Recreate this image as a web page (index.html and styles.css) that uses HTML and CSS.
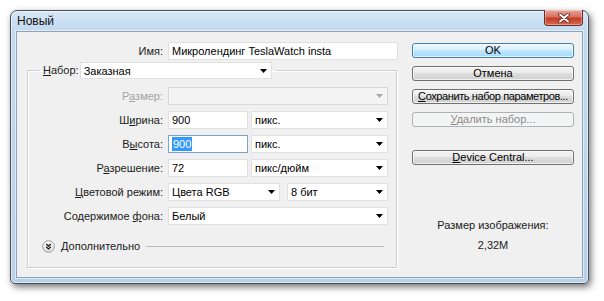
FILE: index.html
```html
<!DOCTYPE html>
<html lang="ru">
<head>
<meta charset="utf-8">
<title>Новый</title>
<link rel="stylesheet" href="styles.css">
</head>
<body>
<div class="window">
  <div class="titlebar">
    <span class="title">Новый</span>
    <div class="close">
      <svg width="14" height="10" viewBox="0 0 14 10"><path d="M3 1.5 L11 8.5 M11 1.5 L3 8.5" stroke="#5a1a12" stroke-width="3.6" stroke-linecap="round"/><path d="M3 1.5 L11 8.5 M11 1.5 L3 8.5" stroke="#ffffff" stroke-width="2" stroke-linecap="round"/></svg>
    </div>
  </div>
  <div class="client">
    <div class="left">
      <div class="name-row">
        <span class="lbl name-lbl">Имя:</span>
        <div class="field name-field">Микролендинг TeslaWatch insta</div>
      </div>
      <fieldset class="group">
        <legend class="legend">
          <span class="lbl"><u>Н</u>абор:</span>
          <div class="field select preset"><span>Заказная</span><svg class="arrow" width="7" height="4" viewBox="0 0 7 4"><polygon points="0,0 7,0 3.5,4" fill="#000"/></svg></div>
        </legend>
        <div class="grid">
          <span class="lbl dis">Р<u>а</u>змер:</span>
          <div class="field select disabled"><span></span><svg class="arrow" width="7" height="4" viewBox="0 0 7 4"><polygon points="0,0 7,0 3.5,4" fill="#a8a8a8"/></svg></div>

          <span class="lbl">Ш<u>и</u>рина:</span>
          <div class="pair">
            <div class="field num">900</div>
            <div class="field select unit"><span>пикс.</span><svg class="arrow" width="7" height="4" viewBox="0 0 7 4"><polygon points="0,0 7,0 3.5,4" fill="#000"/></svg></div>
          </div>

          <span class="lbl">В<u>ы</u>сота:</span>
          <div class="pair">
            <div class="field num focus"><span class="sel">900</span></div>
            <div class="field select unit"><span>пикс.</span><svg class="arrow" width="7" height="4" viewBox="0 0 7 4"><polygon points="0,0 7,0 3.5,4" fill="#000"/></svg></div>
          </div>

          <span class="lbl">Р<u>а</u>зрешение:</span>
          <div class="pair">
            <div class="field num">72</div>
            <div class="field select unit"><span>пикс/дюйм</span><svg class="arrow" width="7" height="4" viewBox="0 0 7 4"><polygon points="0,0 7,0 3.5,4" fill="#000"/></svg></div>
          </div>

          <span class="lbl"><u>Ц</u>ветовой режим:</span>
          <div class="pair mode">
            <div class="field select color"><span>Цвета RGB</span><svg class="arrow" width="7" height="4" viewBox="0 0 7 4"><polygon points="0,0 7,0 3.5,4" fill="#000"/></svg></div>
            <div class="field select bits"><span>8 бит</span><svg class="arrow" width="7" height="4" viewBox="0 0 7 4"><polygon points="0,0 7,0 3.5,4" fill="#000"/></svg></div>
          </div>

          <span class="lbl">Содержимое <u>ф</u>она:</span>
          <div class="field select"><span>Белый</span><svg class="arrow" width="7" height="4" viewBox="0 0 7 4"><polygon points="0,0 7,0 3.5,4" fill="#000"/></svg></div>
        </div>
        <div class="advanced">
          <svg class="adv-icon" width="13" height="13" viewBox="0 0 13 13">
            <defs><linearGradient id="g" x1="0" y1="0" x2="0" y2="1"><stop offset="0" stop-color="#ffffff"/><stop offset="1" stop-color="#dcdcdc"/></linearGradient></defs>
            <circle cx="6.5" cy="6.5" r="5.8" fill="url(#g)" stroke="#9c9c9c" stroke-width="1"/>
            <path d="M4.2 3.9 L6.5 6 L8.8 3.9 M4.2 6.8 L6.5 8.9 L8.8 6.8" fill="none" stroke="#1a1a1a" stroke-width="1.3"/>
          </svg>
          <span class="adv-text">Дополнительно</span>
          <span class="adv-line"></span>
        </div>
      </fieldset>
    </div>
    <div class="right">
      <div class="btn default">OK</div>
      <div class="btn">Отмена</div>
      <div class="btn tight"><u>С</u>охранить набор параметров...</div>
      <div class="btn disabled"><u>У</u>далить набор...</div>
      <div class="btn device"><u>D</u>evice Central...</div>
      <div class="info">Размер изображения:</div>
      <div class="info size">2,32M</div>
    </div>
  </div>
</div>
</body>
</html>
```
FILE: styles.css
```css
* { box-sizing: border-box; }
html, body { margin: 0; padding: 0; }
body {
  width: 604px;
  height: 301px;
  background: #ffffff;
  overflow: hidden;
  font-family: "Liberation Sans", Arial, sans-serif;
  font-size: 11px;
  color: #000;
}
.window {
  margin: 10px 0 0 10px;
  width: 579px;
  height: 274px;
  border: 1px solid #45505c;
  border-radius: 7px 7px 5px 5px;
  padding: 0 5px 5px;
  background: linear-gradient(180deg, #d6e6f6 0px, #c3d9ef 20px, #b9d0e9 100%);
  box-shadow: 2px 3px 7px rgba(0,0,0,0.55), inset 0 0 0 1px rgba(255,255,255,0.55);
  display: flex;
  flex-direction: column;
}
.titlebar {
  height: 20px;
  display: flex;
  align-items: flex-start;
}
.title {
  font-size: 12px;
  margin: 3px 0 0 1px;
  color: #111;
}
.close {
  margin: -1px 0 0 auto;
  width: 39px;
  height: 16px;
  border: 1px solid #6b2a22;
  border-top: none;
  border-radius: 0 0 4px 4px;
  background: linear-gradient(180deg, #e8a69c 0%, #d6705f 45%, #c53a26 55%, #d26a4f 100%);
  box-shadow: inset 0 0 0 1px rgba(255,255,255,0.35);
  display: flex;
  align-items: center;
  justify-content: center;
}
.client {
  height: 247px;
  border: 1px solid #8ea3b9;
  box-shadow: 0 0 0 1px rgba(255,255,255,0.5);
  background: #f0f0f0;
  display: flex;
  padding-top: 10px;
}
.left {
  width: 381px;
  display: flex;
  flex-direction: column;
}
.lbl {
  color: #1a1a1a;
  white-space: nowrap;
  text-align: right;
  line-height: 18px;
}
.lbl.dis { color: #a3a3a3; }
.name-row {
  display: flex;
  height: 18px;
  gap: 5px;
}
.name-lbl { width: 146px; }
.field {
  height: 18px;
  background: #fff;
  border: 1px solid #e1e1e1;
  line-height: 16px;
  padding-left: 3px;
  white-space: nowrap;
  overflow: hidden;
  display: flex;
  align-items: center;
}
.name-field { width: 230px; }
.select span { flex: 1; }
.arrow { flex: none; margin-right: 4px; }
.field.disabled { background: #f4f4f4; border-color: #d8d8d8; }
.group {
  margin: 2px 0 0 10px;
  width: 370px;
  min-width: 0;
  border: 1px solid #cfcfcf;
  box-shadow: inset 1px 1px 0 #ffffff, 1px 1px 0 #ffffff;
  padding: 8px 7px 14px 12px;
}
.legend {
  padding: 0 5px 0 3px;
  display: flex;
  align-items: center;
  gap: 1px;
  height: 17px;
}
.legend .lbl { line-height: 17px; }
.preset { width: 192px; height: 17px; }
.grid {
  display: grid;
  grid-template-columns: 123px 220px;
  grid-auto-rows: 18px;
  column-gap: 5px;
  row-gap: 6px;
}
.pair {
  display: flex;
  gap: 3px;
}
.pair.mode { gap: 7px; }
.num { width: 80px; }
.unit { flex: 1; }
.color { width: 112px; }
.bits { flex: 1; }
.field.focus { border-color: #7da2ce; }
.sel {
  background: #3399ff;
  color: #fff;
  line-height: 14px;
  padding: 0 1px;
}
.advanced {
  margin-top: 14px;
  height: 14px;
  display: flex;
  align-items: center;
  margin-left: 2px;
}
.adv-icon { flex: none; }
.adv-text { margin-left: 6px; color: #1a1a1a; white-space: nowrap; }
.adv-line {
  flex: 1;
  height: 1px;
  background: #b9b9b9;
  margin: 0 5px 0 6px;
}
.right {
  margin-left: 14px;
  width: 162px;
  display: flex;
  flex-direction: column;
  padding-top: 1px;
}
.btn {
  height: 15px;
  margin-bottom: 8px;
  border: 1px solid #707070;
  border-radius: 3px;
  background: linear-gradient(180deg, #f3f3f3 0%, #ebebeb 45%, #dddddd 50%, #d0d0d0 100%);
  box-shadow: inset 0 0 0 1px rgba(255,255,255,0.7);
  text-align: center;
  line-height: 13px;
  white-space: nowrap;
  color: #000;
}
.btn.tight { letter-spacing: -0.4px; }
.btn.default {
  border-color: #3c7fb1;
  background: linear-gradient(180deg, #eaf6fd 0%, #d9f0fc 45%, #bee6fd 50%, #a7d9f5 100%);
}
.btn.disabled {
  border-color: #adb2b5;
  background: #f4f4f4;
  color: #8a8a8a;
  box-shadow: none;
}
.btn.device { margin-top: 15px; }
.info {
  text-align: center;
  line-height: 14px;
  color: #1a1a1a;
  margin-top: 45px;
}
.info.size { margin-top: 6px; }
```
